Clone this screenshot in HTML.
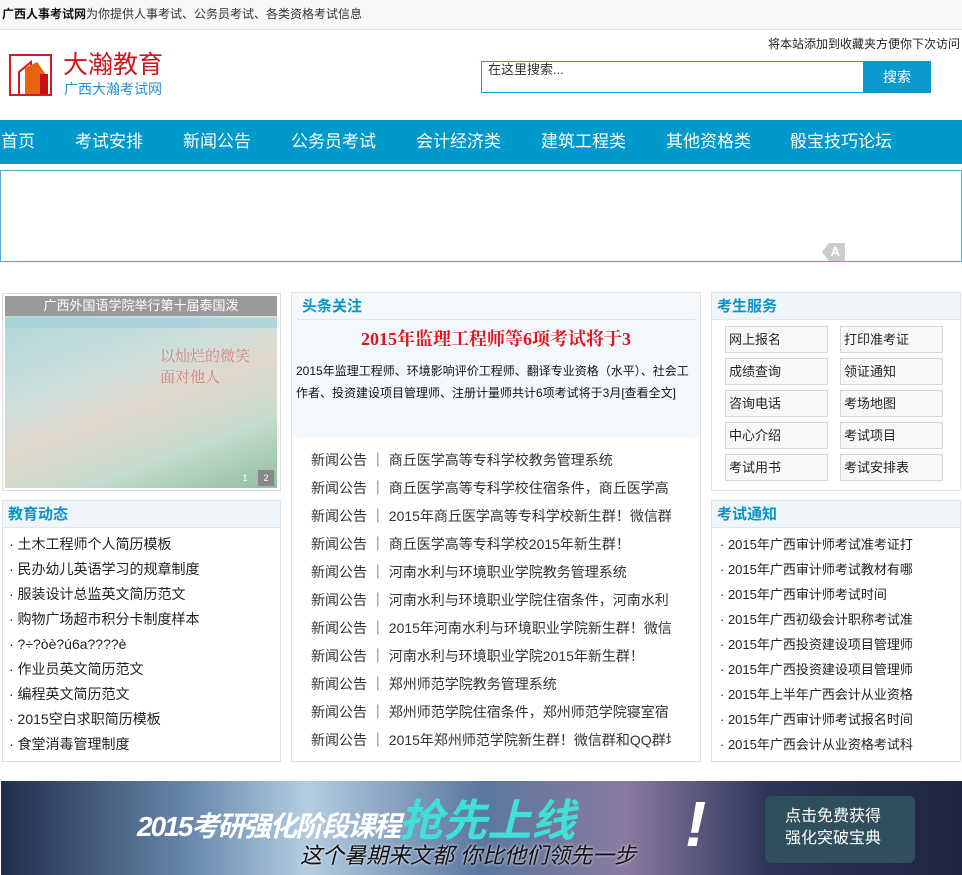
<!DOCTYPE html>
<html><head><meta charset="utf-8"><style>
*{margin:0;padding:0;box-sizing:border-box}
body{width:962px;height:875px;background:#fff;font-family:"Liberation Sans","Noto Sans CJK SC",sans-serif;font-size:13px;color:#333;position:relative;overflow:hidden}
.a{position:absolute}
.top{left:0;top:0;width:962px;height:30px;background:#f7f7f7;border-bottom:1px solid #e3e3e3;line-height:29px;padding-left:2px;font-size:12px}
.nav{left:0;top:120px;width:962px;height:44px;background:#0099cc}
.nav span{position:absolute;top:0;line-height:44px;color:#fff;font-size:17px}
.box{border:1px solid #dde3ea;background:#fff}
.hd{height:27px;background:#f0f5fa;border-bottom:1px solid #dde6ee;color:#0b93c8;font-size:15px;font-weight:bold;line-height:27px;padding-left:5px}
.list div{height:25px;line-height:25px;font-size:14px;color:#222;white-space:nowrap;overflow:hidden}
.news div{height:28px;line-height:28px;font-size:14px;color:#333;white-space:nowrap;overflow:hidden}
.btn{position:absolute;width:103px;height:27px;border:1px solid #d6d6d6;background:#f7f7f7;font-size:13px;line-height:25px;padding-left:3px;color:#222}
</style></head><body>
<div class="a top"><b style="color:#111">广西人事考试网</b>为你提供人事考试、公务员考试、各类资格考试信息</div>
<div class="a" style="right:2px;top:35px;font-size:12px;color:#222">将本站添加到收藏夹方便你下次访问</div>
<svg class="a" style="left:9px;top:54px" width="46" height="42" viewBox="0 0 46 42">
<rect x="1" y="1" width="41" height="40" fill="none" stroke="#d8191f" stroke-width="2"/>
<path d="M10 40 L10 18 L22 8 L22 40" fill="none" stroke="#d8191f" stroke-width="2"/>
<path d="M16 40 L16 14 L28 8 L38 22 L38 40 Z" fill="#e7640f"/>
<rect x="31" y="20" width="8" height="20" fill="#c81014"/>
</svg>
<div class="a" style="left:63px;top:50px;font-size:25px;color:#d0141a;line-height:30px">大瀚教育</div>
<div class="a" style="left:64px;top:80px;font-size:14px;color:#2a8fcf;line-height:18px">广西大瀚考试网</div>
<div class="a" style="left:481px;top:61px;width:383px;height:32px;border:1px solid #1e9bd0;font-size:13px;padding:0 6px;line-height:16px;color:#333">在这里搜索...</div>
<div class="a" style="left:863px;top:61px;width:68px;height:32px;background:#0a98cd;color:#fff;font-size:14px;line-height:32px;text-align:center">搜索</div>
<div class="a nav"><span style="left:1px">首页</span><span style="left:75px">考试安排</span><span style="left:183px">新闻公告</span><span style="left:291px">公务员考试</span><span style="left:416px">会计经济类</span><span style="left:541px">建筑工程类</span><span style="left:666px">其他资格类</span><span style="left:790px">骰宝技巧论坛</span></div>
<div class="a" style="left:0;top:170px;width:962px;height:92px;border:1px solid #5aa9d6"></div>
<div class="a" style="left:822px;top:243px;width:23px;height:18px;background:#ccc;color:#fff;font-weight:bold;font-size:13px;line-height:18px;text-align:center;clip-path:polygon(30% 0,100% 0,100% 100%,30% 100%,0 50%)">&nbsp;A</div>

<div class="a" style="left:2px;top:293px;width:279px;height:198px;border:1px solid #ddd"></div>
<div class="a" style="left:5px;top:296px;width:272px;height:192px;background:linear-gradient(160deg,#a8d4da 0%,#cfe0dc 40%,#e2d8cc 55%,#c6dccf 75%,#8fbf9e 100%)"></div>
<div class="a" style="left:5px;top:318px;width:272px;height:10px;background:#9fd0d8;opacity:.7"></div>
<div class="a" style="left:160px;top:345px;width:110px;height:45px;color:#c44;font-size:15px;font-family:'Liberation Serif','Noto Serif CJK SC',serif;opacity:.6">以灿烂的微笑<br>面对他人</div>
<div class="a" style="left:5px;top:296px;width:272px;height:20px;background:#9a9a9a;color:#fff;font-size:13px;text-align:center;line-height:20px">广西外国语学院举行第十届泰国泼</div>
<div class="a" style="left:258px;top:470px;width:16px;height:16px;background:#888;color:#fff;font-size:9px;text-align:center;line-height:16px">2</div>
<div class="a" style="left:234px;top:470px;width:22px;height:16px;color:#fff;font-size:9px;text-align:center;line-height:16px">1</div>

<div class="a box" style="left:2px;top:500px;width:279px;height:262px"><div class="hd">教育动态</div>
<div class="list" style="padding:4px 0 0 6px">
<div>· 土木工程师个人简历模板</div><div>· 民办幼儿英语学习的规章制度</div><div>· 服装设计总监英文简历范文</div><div>· 购物广场超市积分卡制度样本</div><div>· ?÷?òè?ú6a????è</div><div>· 作业员英文简历范文</div><div>· 编程英文简历范文</div><div>· 2015空白求职简历模板</div><div>· 食堂消毒管理制度</div></div></div>

<div class="a box" style="left:291px;top:292px;width:410px;height:470px;border-color:#e3e3e3"></div>
<div class="a" style="left:292px;top:293px;width:408px;height:144px;background:#f3f8fd"></div>
<div class="a" style="left:297px;top:293px;width:398px;height:27px;border-bottom:1px solid #dde6ee;color:#0b93c8;font-size:15px;font-weight:bold;line-height:27px;padding-left:5px">头条关注</div>
<div class="a" style="left:292px;top:326px;width:408px;text-align:center;font-family:'Liberation Serif','Noto Serif CJK SC',serif;font-size:18px;font-weight:bold;color:#e0141a;line-height:26px">2015年监理工程师等6项考试将于3</div>
<div class="a" style="left:296px;top:360px;width:400px;font-size:12px;line-height:22px;color:#111">2015年监理工程师、环境影响评价工程师、翻译专业资格（水平）、社会工作者、投资建设项目管理师、注册计量师共计6项考试将于3月[查看全文]</div>
<div class="a news" style="left:311px;top:446px;width:360px">
<div>新闻公告 ｜ 商丘医学高等专科学校教务管理系统</div><div>新闻公告 ｜ 商丘医学高等专科学校住宿条件，商丘医学高</div><div>新闻公告 ｜ 2015年商丘医学高等专科学校新生群！微信群</div><div>新闻公告 ｜ 商丘医学高等专科学校2015年新生群！</div><div>新闻公告 ｜ 河南水利与环境职业学院教务管理系统</div><div>新闻公告 ｜ 河南水利与环境职业学院住宿条件，河南水利</div><div>新闻公告 ｜ 2015年河南水利与环境职业学院新生群！微信</div><div>新闻公告 ｜ 河南水利与环境职业学院2015年新生群！</div><div>新闻公告 ｜ 郑州师范学院教务管理系统</div><div>新闻公告 ｜ 郑州师范学院住宿条件，郑州师范学院寝室宿</div><div>新闻公告 ｜ 2015年郑州师范学院新生群！微信群和QQ群均</div></div>

<div class="a box" style="left:711px;top:292px;width:250px;height:199px"><div class="hd">考生服务</div></div>
<div class="btn" style="left:725px;top:326px">网上报名</div><div class="btn" style="left:840px;top:326px">打印准考证</div>
<div class="btn" style="left:725px;top:358px">成绩查询</div><div class="btn" style="left:840px;top:358px">领证通知</div>
<div class="btn" style="left:725px;top:390px">咨询电话</div><div class="btn" style="left:840px;top:390px">考场地图</div>
<div class="btn" style="left:725px;top:422px">中心介绍</div><div class="btn" style="left:840px;top:422px">考试项目</div>
<div class="btn" style="left:725px;top:454px">考试用书</div><div class="btn" style="left:840px;top:454px">考试安排表</div>

<div class="a box" style="left:711px;top:500px;width:250px;height:262px"><div class="hd">考试通知</div>
<div class="list" style="padding:4px 0 0 8px"><div style="font-size:13px">· 2015年广西审计师考试准考证打</div><div style="font-size:13px">· 2015年广西审计师考试教材有哪</div><div style="font-size:13px">· 2015年广西审计师考试时间</div><div style="font-size:13px">· 2015年广西初级会计职称考试准</div><div style="font-size:13px">· 2015年广西投资建设项目管理师</div><div style="font-size:13px">· 2015年广西投资建设项目管理师</div><div style="font-size:13px">· 2015年上半年广西会计从业资格</div><div style="font-size:13px">· 2015年广西审计师考试报名时间</div><div style="font-size:13px">· 2015年广西会计从业资格考试科</div></div></div>

<div class="a" style="left:1px;top:781px;width:961px;height:94px;background:linear-gradient(90deg,#1f2d4a 0%,#6a8ab0 20%,#b5cde0 32%,#5a77a0 50%,#8a7aa0 65%,#2c3558 80%,#1d2640 100%)"></div>
<div class="a" style="left:137px;top:802px;font-size:28px;font-weight:bold;font-style:italic;color:#fff;letter-spacing:-2px;line-height:40px">2015考研强化阶段课程<span style="font-size:44px;color:#3fe0d8;letter-spacing:0">抢先上线</span></div>
<div class="a" style="left:685px;top:784px;font-size:64px;font-weight:bold;color:#fff;font-style:italic;line-height:80px">!</div>
<div class="a" style="left:300px;top:842px;font-size:22px;color:#111;font-style:italic;text-shadow:0 0 3px #fff;line-height:28px">这个暑期来文都 你比他们领先一步</div>
<div class="a" style="left:765px;top:796px;width:150px;height:67px;background:#2f4f5c;border-radius:6px;color:#fff;font-size:16px;line-height:22px;padding:10px 0 0 20px">点击免费获得<br>强化突破宝典</div>
</body></html>
